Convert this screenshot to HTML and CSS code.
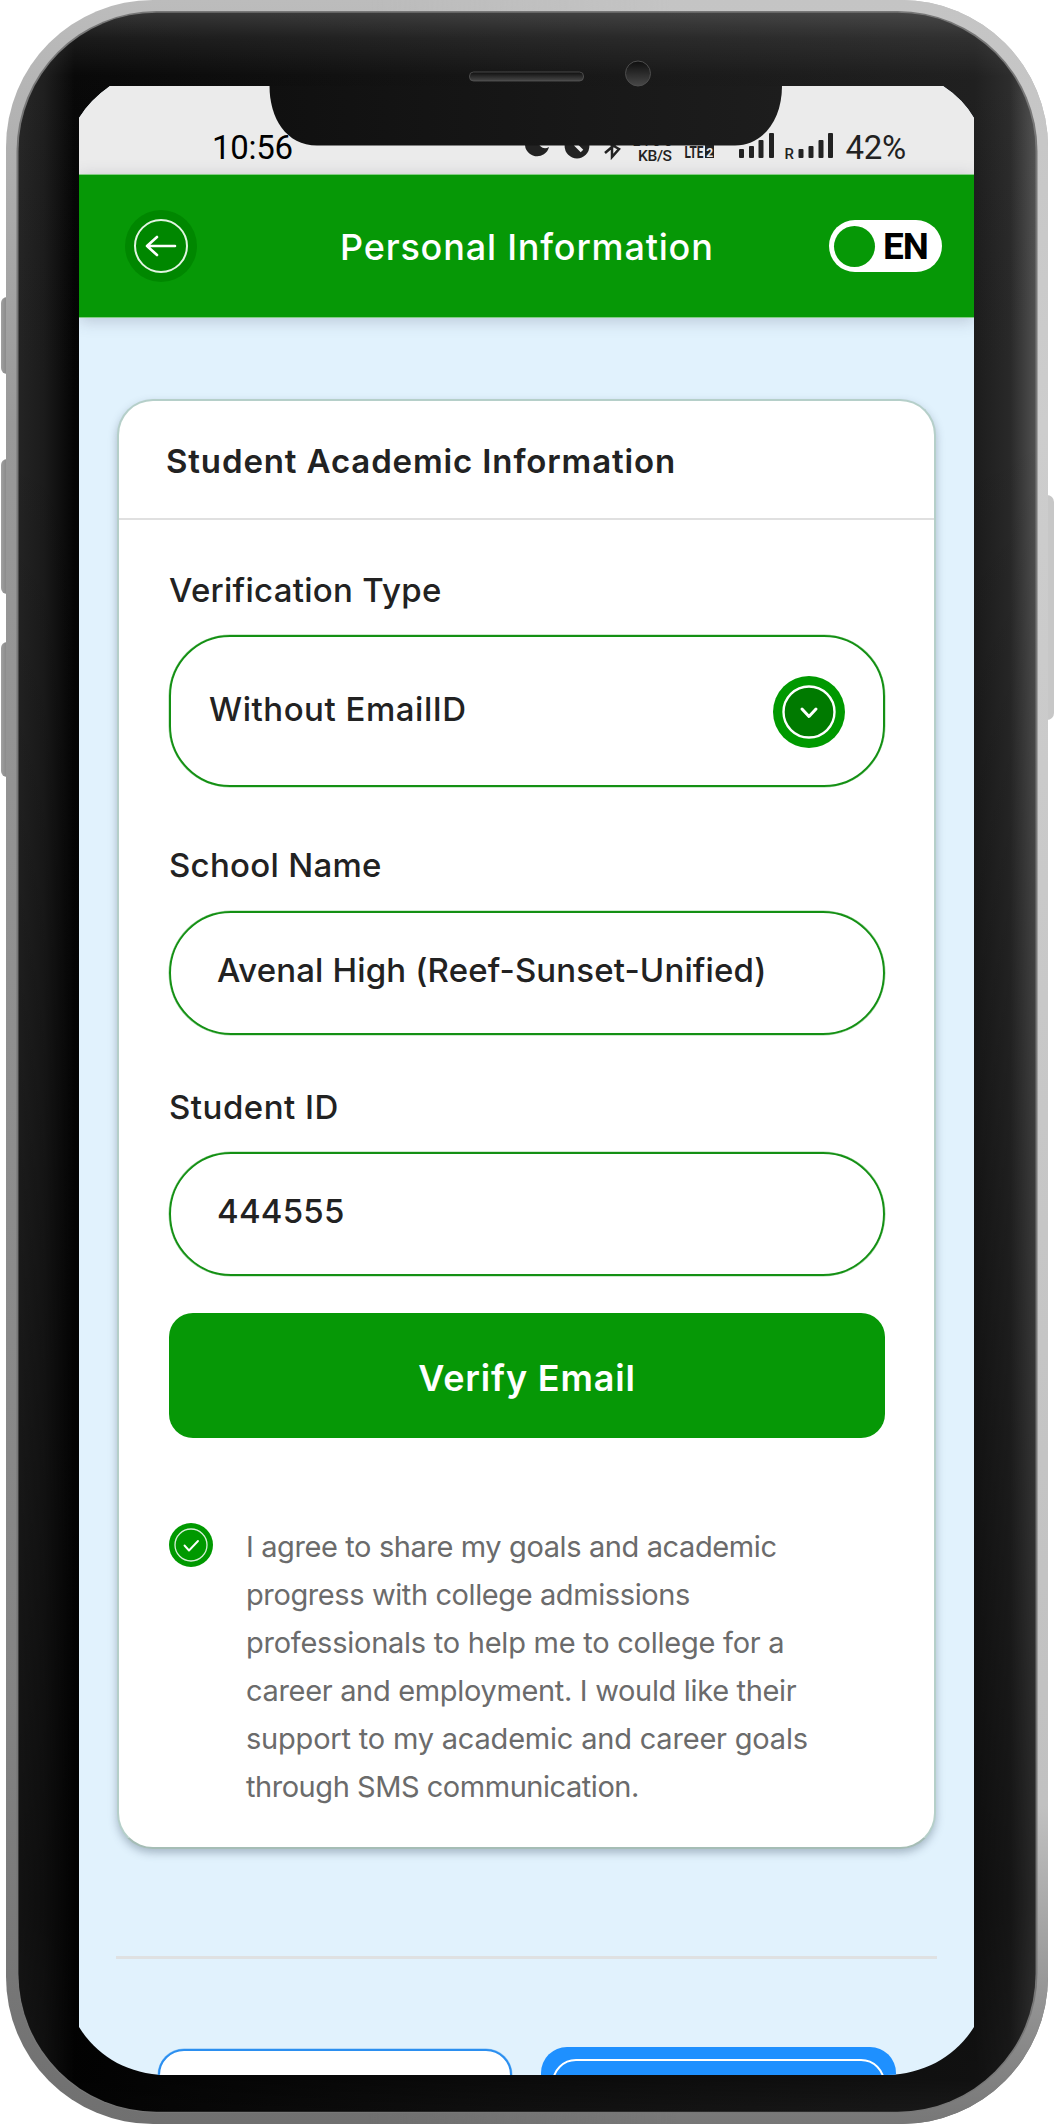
FILE: index.html
```html
<!DOCTYPE html>
<html lang="en">
<head>
<meta charset="utf-8">
<title>Personal Information</title>
<link rel="stylesheet" href="styles.css">
</head>
<body>
<div class="device">
  <svg class="frame" viewBox="0 0 1054 2124" aria-hidden="true">
    <defs>
      <linearGradient id="metalLeft" x1="0" y1="0" x2="0" y2="1"><stop offset="0" stop-color="#bcbcbc"/><stop offset=".2" stop-color="#999"/><stop offset=".8" stop-color="#848484"/><stop offset="1" stop-color="#707070"/></linearGradient>
      <linearGradient id="metalRight" x1="0" y1="0" x2="0" y2="1"><stop offset="0" stop-color="#c4c4c4"/><stop offset=".2" stop-color="#cdcdcd"/><stop offset=".85" stop-color="#c1c1c1"/><stop offset="1" stop-color="#777"/></linearGradient>
      <linearGradient id="across"><stop offset=".35" stop-color="#000"/><stop offset=".65" stop-color="#fff"/></linearGradient>
      <mask id="rightHalf"><rect width="1054" height="2124" fill="url(#across)"/></mask>
      <linearGradient id="glassLeft" x1="0" x2="1"><stop offset="0" stop-color="#242424"/><stop offset=".025" stop-color="#1b1b1b"/><stop offset=".055" stop-color="#040404"/><stop offset=".5" stop-color="#121212"/><stop offset=".94" stop-color="#1c1c1c"/><stop offset=".975" stop-color="#292929"/><stop offset="1" stop-color="#505050"/></linearGradient>
      <linearGradient id="sheen" x1="0" x2="0" y1="0" y2="1"><stop offset="0" stop-color="#fff" stop-opacity=".19"/><stop offset=".012" stop-color="#fff" stop-opacity=".09"/><stop offset=".03" stop-color="#fff" stop-opacity=".02"/><stop offset=".2" stop-color="#000" stop-opacity="0"/><stop offset=".9" stop-color="#000" stop-opacity=".5"/><stop offset=".985" stop-color="#000" stop-opacity=".4"/><stop offset="1" stop-color="#000" stop-opacity=".1"/></linearGradient>
      <linearGradient id="key" x1="0" x2="1"><stop offset="0" stop-color="#a0a0a0"/><stop offset=".4" stop-color="#858585"/><stop offset="1" stop-color="#777"/></linearGradient>
    </defs>
    <rect x="1" y="297" width="16" height="77" rx="6" fill="url(#key)"/>
    <rect x="1" y="459" width="16" height="135" rx="6" fill="url(#key)"/>
    <rect x="1" y="642" width="16" height="135" rx="6" fill="url(#key)"/>
    <rect x="1036" y="495" width="18" height="225" rx="7" fill="#c7c7c7"/>
    <rect x="6" y="0" width="1042" height="2124" rx="147" fill="url(#metalLeft)"/>
    <rect x="6" y="0" width="1042" height="2124" rx="147" fill="url(#metalRight)" mask="url(#rightHalf)"/>
    <rect x="16.5" y="11" width="1021" height="2102" rx="140" fill="#777"/>
    <rect x="18.5" y="12.7" width="1017" height="2099" rx="138" fill="url(#glassLeft)"/>
    <rect x="18.5" y="12.7" width="1017" height="2099" rx="138" fill="url(#sheen)"/>
  </svg>

  <main class="screen">
    <div class="statusbar">
      <time class="clock">10:56</time>
      <svg class="status-icons" viewBox="0 0 310 40" aria-hidden="true">
        <g fill="#222">
          <path d="M2 10a12.200 12.200 0 0 0 24 4c-5 3-10 0-11-6z"/>
          <circle cx="54" cy="13" r="12.400"/>
          <path d="M53 5v7l6 6" fill="none" stroke="#ebebeb" stroke-width="3.600"/>
          <path d="M82 20l14-12M82 8l14 8-7 8V2" fill="none" stroke="#222" stroke-width="2.500"/>
          <rect x="182" y="12" width="9" height="13"/>
          <rect x="216" y="16" width="5" height="9" rx="1"/><rect x="226" y="13" width="5" height="12" rx="1"/><rect x="235.500" y="7" width="5" height="18" rx="1"/><rect x="246" y="0" width="5" height="25" rx="1"/>
          <rect x="275.500" y="16" width="5" height="9" rx="1"/><rect x="285.500" y="13" width="5" height="12" rx="1"/><rect x="295.500" y="7" width="5" height="18" rx="1"/><rect x="305" y="0" width="5" height="25" rx="1"/>
        </g>
        <g class="status-text">
          <text x="110" y="12.500" font-size="13" textLength="39">2.00</text>
          <text x="115" y="27.500" font-size="15.500" textLength="34">KB/S</text>
          <text x="161.500" y="25" font-size="16" font-weight="700" textLength="19" lengthAdjust="spacingAndGlyphs">LTE</text>
          <text x="183.200" y="23.500" font-size="12" font-weight="700" fill="#ebebeb">2</text>
          <text x="261.500" y="26" font-size="15">R</text>
        </g>
      </svg>
      <span class="battery">42%</span>
    </div>

    <header class="appbar">
      <svg class="back" viewBox="0 0 72 72" aria-label="Back"><circle cx="36" cy="36" r="36" fill="#008700"/><circle cx="36" cy="36" r="26" fill="none" stroke="#e2f5e2" stroke-width="2"/><path d="M50 36H22M32 27l-10 9 10 9" fill="none" stroke="#fff" stroke-width="2.600" stroke-linecap="round" stroke-linejoin="round"/></svg>
      <h1 class="title">Personal Information</h1>
      <div class="lang"><span class="knob"></span><span class="lang-text">EN</span></div>
    </header>

    <section class="card">
      <h2 class="card-title"><span>Student Academic Information</span></h2>
      <div class="form">
        <div class="label l-type">Verification Type</div>
        <div class="field select"><span class="v-type">Without EmailID</span>
          <svg class="chev" viewBox="0 0 72 72" aria-hidden="true"><circle cx="36" cy="36" r="36" fill="#090"/><circle cx="36" cy="36" r="25.500" fill="#007a00" stroke="#fff" stroke-width="2.400"/><path d="M29 33l7 7.500 7-7.500" fill="none" stroke="#fff" stroke-width="3" stroke-linecap="round" stroke-linejoin="round"/></svg>
        </div>
        <div class="label l-school">School Name</div>
        <div class="field"><span class="v-school">Avenal High (Reef-Sunset-Unified)</span></div>
        <div class="label l-id">Student ID</div>
        <div class="field"><span class="v-id">444555</span></div>
        <button class="verify"><span>Verify Email</span></button>
        <div class="agree">
          <svg class="check" viewBox="0 0 44 44" aria-hidden="true"><circle cx="22" cy="22" r="22" fill="#090"/><circle cx="22" cy="22" r="16" fill="none" stroke="#d8f0d8" stroke-width="1.300"/><path d="M15.500 22.500l4.500 5 9-9.500" fill="none" stroke="#fff" stroke-width="1.900" stroke-linecap="round" stroke-linejoin="round"/></svg>
          <p class="terms"><span class="t1">I agree to share my goals and academic</span><span class="t2">progress with college admissions</span><span class="t3">professionals to help me to college for a</span><span class="t4">career and employment. I would like their</span><span class="t5">support to my academic and career goals</span><span class="t6">through SMS communication.</span></p>
        </div>
      </div>
    </section>
    <hr class="rule">
    <div class="actions"><div class="outline-btn"></div><div class="solid-btn"><div class="solid-ring"></div></div></div>
  </main>

  <svg class="notch" viewBox="0 0 514 100" aria-hidden="true">
    <defs>
      <linearGradient id="nf"><stop offset="0" stop-color="#101010"/><stop offset="1" stop-color="#1d1d1d"/></linearGradient>
      <linearGradient id="hole" x1="0" x2="0" y1="0" y2="1"><stop offset="0" stop-color="#0e0e0e"/><stop offset="1" stop-color="#484848"/></linearGradient>
    </defs>
    <path d="M.5 40C.5 72 17 99.500 48 99.500H466C494 99.500 513 74 513 40z" fill="url(#nf)"/>
    <rect x="200.500" y="26" width="114" height="9" rx="4" fill="url(#hole)" stroke="#555" stroke-width=".8"/>
    <circle cx="369" cy="27.500" r="12.500" fill="url(#hole)" stroke="#4d4d4d"/>
  </svg>
</div>
</body>
</html>
```
FILE: styles.css
```css
* { box-sizing: border-box; }
body { margin: 0; background: #fff; font-family: Inter, "Liberation Sans", sans-serif; color: #222; font-feature-settings: "calt" 0; }
.device { position: relative; width: 1054px; height: 2124px; overflow: hidden; padding: 86px 80px 49px 79px; }
.frame { position: absolute; left: 0; top: 0; width: 1054px; height: 2124px; }
.notch { position: absolute; left: 269px; top: 46px; width: 514px; height: 100px; }
.screen {
  position: relative; width: 895px; height: 1989px; overflow: hidden; background: #e1f2fd;
  clip-path: path("M0 32Q11 14 31 0H864Q884 13 895 32V1941C877 1970 846 1988 808 1989H86C48 1988 18 1970 0 1941Z");
}
.statusbar { display: flex; height: 88px; background: #ebebeb; font-family: Roboto, sans-serif; }
.clock { margin: 43px 0 0 133px; width: 311px; font-size: 33px; line-height: 38px; letter-spacing: -.3px; color: #000; white-space: nowrap; }
.status-icons { flex: none; width: 310px; height: 40px; margin-top: 47px; }
.status-text { font-family: Roboto, sans-serif; fill: #222; font-weight: 500; }
.battery { margin: 43px 0 0 12.500px; font-size: 33px; line-height: 38px; letter-spacing: -.3px; }
.appbar { position: relative; display: flex; align-items: center; height: 144px; background: #069806; border-top: 1px solid #84cc84; border-bottom: 1px solid #84cc84; box-shadow: 0 3px 15px rgba(70, 70, 100, .25); }
.back { flex: none; width: 72px; height: 72px; margin-left: 46px; }
.title { flex: none; margin: 2px 0 0 143px; width: 489px; font-size: 36px; font-weight: 500; line-height: 48px; color: #fff; letter-spacing: .82px; white-space: nowrap; }
.lang { display: flex; align-items: center; width: 113px; height: 52px; padding: 0 5px; border-radius: 26px; background: #fff; }
.knob { width: 41px; height: 41px; border-radius: 50%; background: #069806; }
.lang-text { margin: 2px 0 0 8px; font-family: Roboto, sans-serif; font-size: 37px; font-weight: 700; line-height: 50px; letter-spacing: -1px; color: #000; }
.card { width: 819px; height: 1450px; margin: 81px 0 0 38px; background: #fff; border: 2px solid #b5cfc9; border-bottom-color: #a5bdb5; border-radius: 36px; box-shadow: 0 4px 8px rgba(70, 90, 110, .38); }
.card-title { display: flex; align-items: center; height: 119px; margin: 0; padding: 2px 0 0 47px; border-bottom: 2px solid #e0e0e0; font-size: 33px; font-weight: 600; line-height: 40px; letter-spacing: .87px; white-space: nowrap; }
.form { padding: 0 49px 0 50px; font-size: 33px; font-weight: 500; white-space: nowrap; }
.label { line-height: 40px; letter-spacing: .28px; }
.l-type { padding-top: 50px; height: 115px; }
.l-school { padding-top: 58px; height: 124px; }
.l-id { padding-top: 52px; height: 117px; letter-spacing: .5px; }
.field { display: flex; align-items: center; height: 124px; border: 2px solid #149014; border-radius: 62px; box-shadow: 0 0 0 .5px rgba(20, 148, 20, .4); padding: 0 37px 6px 46px; line-height: 40px; }
.select { height: 152px; justify-content: space-between; padding: 0 38px 4px; border-radius: 61px; }
.v-type { letter-spacing: .53px; }
.v-school { letter-spacing: .13px; }
.v-id { letter-spacing: .25px; }
.chev { width: 72px; height: 72px; margin-top: 6px; }
.verify { display: flex; align-items: center; justify-content: center; width: 100%; height: 125px; margin-top: 37px; border: 0; border-radius: 24px; background: #069806; color: #fff; font: 600 36px/44px Inter, sans-serif; letter-spacing: .85px; padding: 4px 0 0; }
.agree { display: flex; margin-top: 84px; }
.check { flex: none; width: 44px; height: 44px; margin-top: 1px; }
.terms { margin: 1px 0 0 33px; font-size: 29px; font-weight: 400; line-height: 48px; color: #6b6b6b; }
.terms span { display: block; }
.t1 { letter-spacing: -.39px; }
.t2 { letter-spacing: -.4px; }
.t3 { letter-spacing: -.25px; }
.t4 { letter-spacing: -.33px; }
.t5 { letter-spacing: -.2px; }
.t6 { letter-spacing: -.46px; }
.rule { width: 821px; height: 3px; margin: 107px 0 0 37px; border: 0; background: #dfe1e2; }
.actions { display: flex; align-items: flex-start; margin-top: 88px; }
.outline-btn { width: 354px; height: 90px; margin: 2px 0 0 79px; border: 2px solid #2b8ff0; border-radius: 26px; box-shadow: 0 0 0 .5px rgba(43, 143, 240, .5); background: #fff; }
.solid-btn { width: 355px; height: 90px; margin-left: 29px; padding: 12px 11px; border-radius: 26px; background: #1e90ff; }
.solid-ring { height: 80px; border: 2px solid #fff; border-radius: 24px; }
```
